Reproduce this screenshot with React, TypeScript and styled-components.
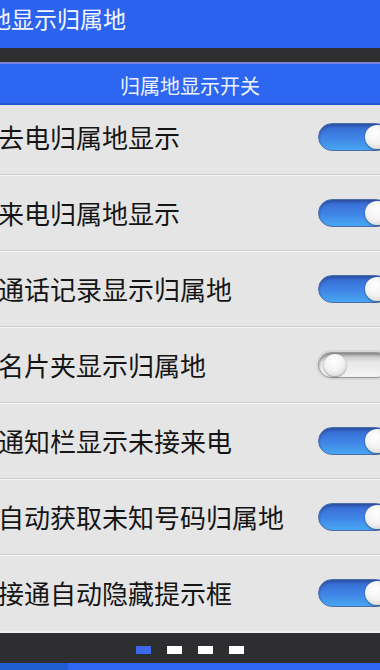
import styled, { createGlobalStyle } from 'styled-components'

const GlobalStyle = createGlobalStyle`
  html, body {
    margin: 0;
    padding: 0;
    background: #e5e5e5;
    font-family: "Noto Sans CJK SC", "Noto Sans", sans-serif;
  }
`

const settings = [
  { label: '去电归属地显示', on: true },
  { label: '来电归属地显示', on: true },
  { label: '通话记录显示归属地', on: true },
  { label: '名片夹显示归属地', on: false },
  { label: '通知栏显示未接来电', on: true },
  { label: '自动获取未知号码归属地', on: true },
  { label: '接通自动隐藏提示框', on: true },
]

const App = () => {
  return (
    <Screen>
      <GlobalStyle />
      <TitleBar>
        <Title>地显示归属地</Title>
      </TitleBar>
      <StatusStrip />
      <SectionHeader>归属地显示开关</SectionHeader>
      <List>
        {settings.map((item) => (
          <Row key={item.label}>
            <Label>{item.label}</Label>
            <Toggle $on={item.on}>
              <Knob $on={item.on} />
            </Toggle>
          </Row>
        ))}
      </List>
      <Pager>
        <Dot $active />
        <Dot />
        <Dot />
        <Dot />
      </Pager>
      <TabBar>
        <TabActive />
      </TabBar>
    </Screen>
  )
}

const Screen = styled.div`
  width: 380px;
  height: 670px;
  overflow: hidden;
  display: flex;
  flex-direction: column;
  background: #e5e5e5;
`

const TitleBar = styled.div`
  height: 48px;
  flex-shrink: 0;
  display: flex;
  align-items: center;
  background: #2c63ee;
  padding-bottom: 12px;
  box-sizing: border-box;
`

const Title = styled.div`
  margin-left: -12px;
  font-size: 23px;
  line-height: 1;
  color: #f4f7ff;
  white-space: nowrap;
`

const StatusStrip = styled.div`
  height: 14px;
  flex-shrink: 0;
  background: #2f2f32;
  border-bottom: 2px solid #7d82da;
`

const SectionHeader = styled.div`
  height: 41px;
  flex-shrink: 0;
  box-sizing: border-box;
  display: flex;
  align-items: center;
  justify-content: center;
  background: #2d66f1;
  border-bottom: 2px solid #2356d2;
  color: #eef3ff;
  font-size: 20px;
  padding-top: 4px;
`

const List = styled.div`
  display: flex;
  flex-direction: column;
  background: #e5e5e5;
`

const Row = styled.div`
  height: 76px;
  box-sizing: border-box;
  display: flex;
  align-items: center;
  justify-content: space-between;
  border-bottom: 1px solid #cdcdcd;
  box-shadow: 0 1px 0 #f4f4f4;

  &:first-child {
    height: 70px;
    padding-bottom: 6px;
  }

  &:last-child {
    border-bottom: none;
    box-shadow: none;
  }
`

const Label = styled.div`
  margin-left: -2px;
  font-size: 26px;
  line-height: 1;
  color: #151515;
  white-space: nowrap;
`

const Toggle = styled.div<{ $on: boolean }>`
  position: relative;
  flex-shrink: 0;
  width: 72px;
  height: ${(p) => (p.$on ? 28 : 26)}px;
  margin-right: -10px;
  border-radius: 14px;
  box-sizing: border-box;
  border: 1px solid ${(p) => (p.$on ? '#4e6fa8' : '#9a9a9a')};
  background: ${(p) =>
    p.$on
      ? 'linear-gradient(to bottom, #3766d2 0%, #3f86e6 55%, #48a6f3 100%)'
      : 'linear-gradient(to bottom, #bdbdbd 0%, #e8e8e8 40%, #f4f4f4 100%)'};
  box-shadow: ${(p) =>
    p.$on
      ? 'inset 0 2px 3px rgba(0, 0, 0, 0.25)'
      : 'inset 0 2px 3px rgba(0, 0, 0, 0.3), 0 0 0 2px #d6d6d6'};
`

const Knob = styled.div<{ $on: boolean }>`
  position: absolute;
  top: 1px;
  ${(p) => (p.$on ? 'left: 46px;' : 'left: 5px;')}
  width: ${(p) => (p.$on ? 24 : 22)}px;
  height: ${(p) => (p.$on ? 24 : 22)}px;
  border-radius: 50%;
  background: radial-gradient(circle at 45% 35%, #ffffff 0%, #f2f2f2 50%, #c9c9c9 100%);
  box-shadow: 0 1px 2px rgba(0, 0, 0, 0.45);
`

const Pager = styled.div`
  height: 27px;
  flex-shrink: 0;
  display: flex;
  align-items: center;
  justify-content: center;
  gap: 16px;
  background: #2e2e30;
  border-top: 2px solid #f0f0f0;
  padding-top: 3px;
  box-sizing: content-box;
`

const Dot = styled.div<{ $active?: boolean }>`
  width: 15px;
  height: 8px;
  background: ${(p) => (p.$active ? '#3b69ea' : '#ffffff')};
`

const TabBar = styled.div`
  flex: 1;
  display: flex;
  background: #2f66f2;
`

const TabActive = styled.div`
  width: 68px;
  background: #1f5fd3;
`

export default App
